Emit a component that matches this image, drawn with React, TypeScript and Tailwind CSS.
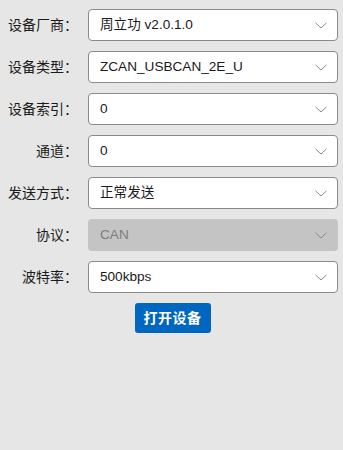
import React from "react";

const rows: { label: string; value: string; disabled?: boolean }[] = [
  { label: "设备厂商：", value: "周立功 v2.0.1.0" },
  { label: "设备类型：", value: "ZCAN_USBCAN_2E_U" },
  { label: "设备索引：", value: "0" },
  { label: "通道：", value: "0" },
  { label: "发送方式：", value: "正常发送" },
  { label: "协议：", value: "CAN", disabled: true },
  { label: "波特率：", value: "500kbps" },
];

function Chevron() {
  return (
    <svg width="12" height="7" viewBox="0 0 12 7" className="shrink-0">
      <path d="M0.5 0.8 L6 6 L11.5 0.8" fill="none" stroke="#8a8a8a" strokeWidth="1" />
    </svg>
  );
}

export default function App() {
  return (
    <div
      className="w-[343px] h-[450px] bg-[#e6e6e6] text-[14px] text-[#1a1a1a] pt-[9px]"
      style={{ fontFamily: '"Liberation Sans", "Noto Sans CJK SC", sans-serif' }}
    >
      <div className="flex flex-col gap-[10px]">
        {rows.map((r) => (
          <div key={r.label} className="flex items-center">
            <div className="w-[78px] text-right shrink-0 whitespace-nowrap">{r.label}</div>
            <div
              className={
                r.disabled
                  ? "ml-[10px] w-[250px] h-[32px] rounded-[4px] bg-[#c4c4c4] flex items-center justify-between pl-[12px] pr-[11px] text-[#7d7d7d]"
                  : "ml-[10px] w-[250px] h-[32px] rounded-[4px] bg-white border border-[#8a8a8a] flex items-center justify-between pl-[11px] pr-[10px]"
              }
            >
              <span className="text-[13.6px]">{r.value}</span>
              <Chevron />
            </div>
          </div>
        ))}
      </div>
      <div className="flex justify-center pl-[2px] mt-[10px]">
        <button className="h-[30px] px-[9px] rounded-[3px] bg-[#0067c0] text-white text-[14px] font-semibold tracking-[0.5px]">
          打开设备
        </button>
      </div>
    </div>
  );
}
